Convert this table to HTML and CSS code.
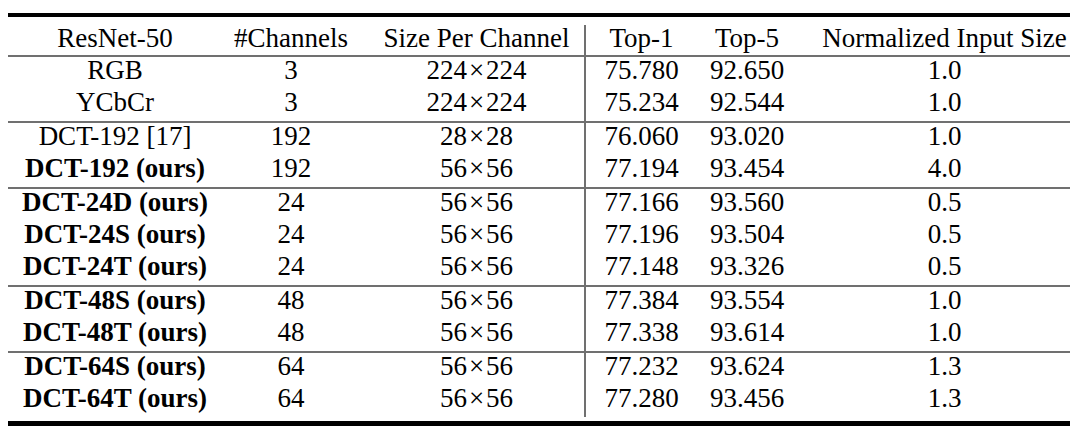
FILE: index.html
```html
<!DOCTYPE html>
<html lang="en">
<head>
    <meta charset="UTF-8">
    <title>ResNet-50 DCT results</title>
    <link rel="stylesheet" href="styles.css">
</head>
<body>
    <div class="tabela">
        <table>
            <colgroup>
                <col class="c-model">
                <col class="c-chan">
                <col class="c-size">
                <col class="c-top1">
                <col class="c-top5">
                <col class="c-norm">
            </colgroup>
            <thead>
                <tr>
                    <th>ResNet-50</th>
                    <th>#Channels</th>
                    <th class="size">Size Per Channel</th>
                    <th class="sep">Top-1</th>
                    <th>Top-5</th>
                    <th class="norm">Normalized Input Size</th>
                </tr>
            </thead>
            <tbody>
                <tr>
                    <td>RGB</td><td>3</td><td class="size">224<span class="x">×</span>224</td>
                    <td class="sep">75.780</td><td>92.650</td><td class="norm">1.0</td>
                </tr>
                <tr>
                    <td>YCbCr</td><td>3</td><td class="size">224<span class="x">×</span>224</td>
                    <td class="sep">75.234</td><td>92.544</td><td class="norm">1.0</td>
                </tr>

                <!-- DCT-192 -->
                <tr class="rule">
                    <td>DCT-192 [17]</td><td>192</td><td class="size">28<span class="x">×</span>28</td>
                    <td class="sep">76.060</td><td>93.020</td><td class="norm">1.0</td>
                </tr>
                <tr>
                    <td><b>DCT-192 (ours)</b></td><td>192</td><td class="size">56<span class="x">×</span>56</td>
                    <td class="sep">77.194</td><td>93.454</td><td class="norm">4.0</td>
                </tr>

                <!-- DCT-24 -->
                <tr class="rule">
                    <td><b>DCT-24D (ours)</b></td><td>24</td><td class="size">56<span class="x">×</span>56</td>
                    <td class="sep">77.166</td><td>93.560</td><td class="norm">0.5</td>
                </tr>
                <tr>
                    <td><b>DCT-24S (ours)</b></td><td>24</td><td class="size">56<span class="x">×</span>56</td>
                    <td class="sep">77.196</td><td>93.504</td><td class="norm">0.5</td>
                </tr>
                <tr>
                    <td><b>DCT-24T (ours)</b></td><td>24</td><td class="size">56<span class="x">×</span>56</td>
                    <td class="sep">77.148</td><td>93.326</td><td class="norm">0.5</td>
                </tr>

                <!-- DCT-48 -->
                <tr class="rule">
                    <td><b>DCT-48S (ours)</b></td><td>48</td><td class="size">56<span class="x">×</span>56</td>
                    <td class="sep">77.384</td><td>93.554</td><td class="norm">1.0</td>
                </tr>
                <tr>
                    <td><b>DCT-48T (ours)</b></td><td>48</td><td class="size">56<span class="x">×</span>56</td>
                    <td class="sep">77.338</td><td>93.614</td><td class="norm">1.0</td>
                </tr>

                <!-- DCT-64 -->
                <tr class="rule">
                    <td><b>DCT-64S (ours)</b></td><td>64</td><td class="size">56<span class="x">×</span>56</td>
                    <td class="sep">77.232</td><td>93.624</td><td class="norm">1.3</td>
                </tr>
                <tr>
                    <td><b>DCT-64T (ours)</b></td><td>64</td><td class="size">56<span class="x">×</span>56</td>
                    <td class="sep">77.280</td><td>93.456</td><td class="norm">1.3</td>
                </tr>
            </tbody>
        </table>
    </div>
</body>
</html>
```

FILE: styles.css
```css
/* Reset */
* {
    margin: 0;
    padding: 0;
    box-sizing: border-box;
}

body {
    background: #fff;
    color: #000;
    font-family: "Liberation Serif", "Times New Roman", serif;
    font-size: 27px;
}

/* Regras grossas de cima e de baixo */
.tabela {
    width: 1062px;
    margin: 13px 0 0 8px;
    border-top: 4px solid #000;
    border-bottom: 5px solid #000;
    padding: 8px 0 4px;
}

table {
    width: 100%;
    table-layout: fixed;
    border-collapse: collapse;
}

.c-model { width: 214px; }
.c-chan  { width: 138px; }
.c-size  { width: 225px; }
.c-top1  { width: 112px; }
.c-top5  { width: 100px; }
.c-norm  { width: 273px; }

th, td {
    font-weight: normal;
    text-align: center;
    white-space: nowrap;
    line-height: 26px;
    padding: 0 0 6px;
}

th {
    padding-bottom: 4px;
    border-bottom: 2px solid #707070;
}

td b {
    font-weight: bold;
}

.size {
    padding-left: 9px;
}

/* Sinal de vezes com um pouco de espaço */
.x {
    margin: 0 2px;
}

.norm {
    padding-left: 22px;
}

/* Linha vertical antes do Top-1 */
.sep {
    border-left: 2px solid #707070;
}

.rule td {
    border-top: 2px solid #707070;
}
```
